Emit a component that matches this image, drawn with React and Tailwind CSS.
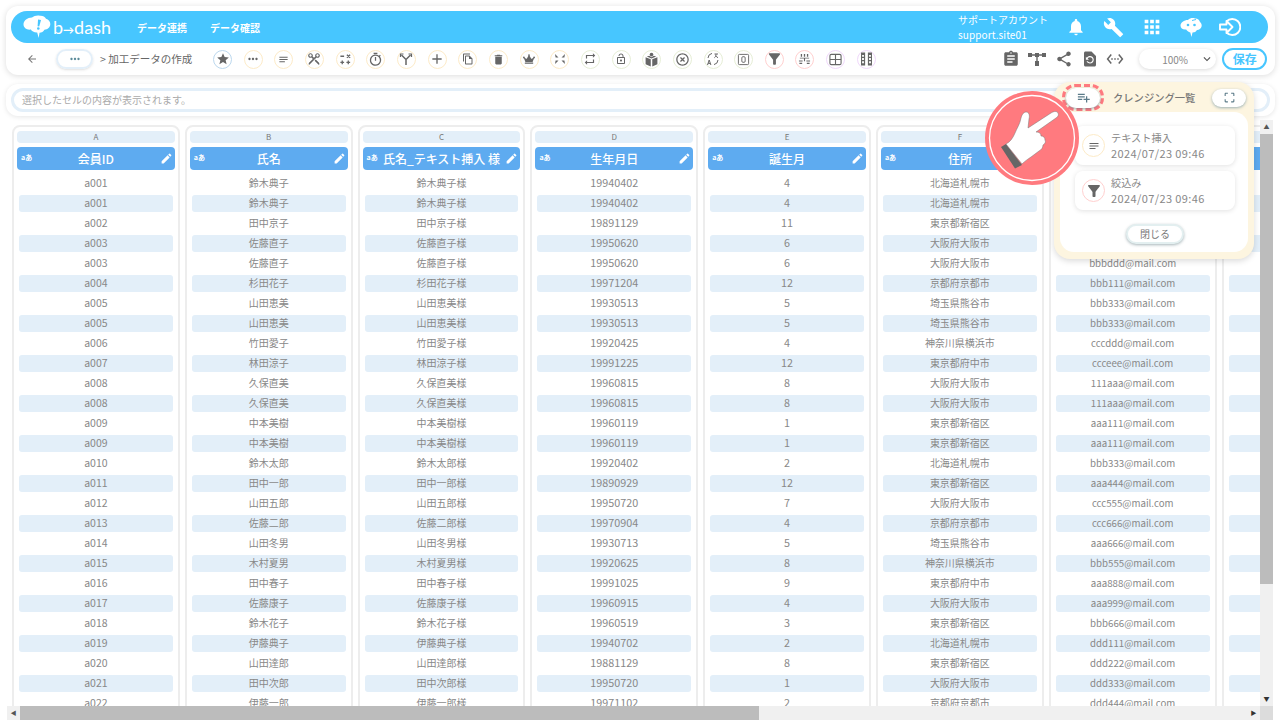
import React from 'react'
import {
  MdArrowBack, MdStar, MdMoreHoriz, MdNotes, MdContentCut, MdOutlineTimer, MdAdd, MdOutlineFileCopy, MdDelete,
  MdRepeat, MdLockOpen, MdHighlightOff, MdFilterAlt, MdNotifications, MdBuild, MdApps, MdAssignment,
  MdShare, MdRestorePage, MdSettingsEthernet, MdExpandMore, MdEdit, MdPlaylistAdd, MdCropFree,
} from 'react-icons/md'
import { FaCrown } from 'react-icons/fa'

const font = { fontFamily: '"Noto Sans CJK JP", "Noto Sans", sans-serif' }

const rows = [
  ['a001', '鈴木典子', '19940402', '4', '北海道札幌市', ''],
  ['a001', '鈴木典子', '19940402', '4', '北海道札幌市', ''],
  ['a002', '田中京子', '19891129', '11', '東京都新宿区', ''],
  ['a003', '佐藤直子', '19950620', '6', '大阪府大阪市', ''],
  ['a003', '佐藤直子', '19950620', '6', '大阪府大阪市', 'bbbddd@mail.com'],
  ['a004', '杉田花子', '19971204', '12', '京都府京都市', 'bbb111@mail.com'],
  ['a005', '山田恵美', '19930513', '5', '埼玉県熊谷市', 'bbb333@mail.com'],
  ['a005', '山田恵美', '19930513', '5', '埼玉県熊谷市', 'bbb333@mail.com'],
  ['a006', '竹田愛子', '19920425', '4', '神奈川県横浜市', 'cccddd@mail.com'],
  ['a007', '林田涼子', '19991225', '12', '東京都府中市', 'ccceee@mail.com'],
  ['a008', '久保直美', '19960815', '8', '大阪府大阪市', '111aaa@mail.com'],
  ['a008', '久保直美', '19960815', '8', '大阪府大阪市', '111aaa@mail.com'],
  ['a009', '中本美樹', '19960119', '1', '東京都新宿区', 'aaa111@mail.com'],
  ['a009', '中本美樹', '19960119', '1', '東京都新宿区', 'aaa111@mail.com'],
  ['a010', '鈴木太郎', '19920402', '2', '北海道札幌市', 'bbb333@mail.com'],
  ['a011', '田中一郎', '19890929', '12', '東京都新宿区', 'aaa444@mail.com'],
  ['a012', '山田五郎', '19950720', '7', '大阪府大阪市', 'ccc555@mail.com'],
  ['a013', '佐藤二郎', '19970904', '4', '京都府京都市', 'ccc666@mail.com'],
  ['a014', '山田冬男', '19930713', '5', '埼玉県熊谷市', 'aaa666@mail.com'],
  ['a015', '木村夏男', '19920625', '8', '神奈川県横浜市', 'bbb555@mail.com'],
  ['a016', '田中春子', '19991025', '9', '東京都府中市', 'aaa888@mail.com'],
  ['a017', '佐藤康子', '19960915', '4', '大阪府大阪市', 'aaa999@mail.com'],
  ['a018', '鈴木花子', '19960519', '3', '東京都新宿区', 'bbb666@mail.com'],
  ['a019', '伊藤典子', '19940702', '2', '北海道札幌市', 'ddd111@mail.com'],
  ['a020', '山田達郎', '19881129', '8', '東京都新宿区', 'ddd222@mail.com'],
  ['a021', '田中次郎', '19950720', '1', '大阪府大阪市', 'ddd333@mail.com'],
  ['a022', '伊藤一郎', '19971102', '2', '京都府京都市', 'ddd444@mail.com'],
]

const columns = [
  { letter: 'A', title: '会員ID', size: 'text-[10.500px] leading-[15px]', cell: (r) => r[0] },
  { letter: 'B', title: '氏名', size: 'text-[10px] leading-[15px]', cell: (r) => r[1] },
  { letter: 'C', title: '氏名_テキスト挿入 様', size: 'text-[10px] leading-[15px]', cell: (r) => r[1] + '様' },
  { letter: 'D', title: '生年月日', size: 'text-[10.800px] leading-[15px]', cell: (r) => r[2] },
  { letter: 'E', title: '誕生月', size: 'text-[10.800px] leading-[15px]', cell: (r) => r[3] },
  { letter: 'F', title: '住所', size: 'text-[10px] leading-[15px]', cell: (r) => r[4] },
  { letter: '', title: '', size: 'text-[9.700px] leading-[17px]', cell: (r) => r[5] },
  { letter: 'H', title: '', size: 'text-[10px] leading-[15px]', cell: () => '' },
]

const CalcIcon = () => (
  <svg width="13" height="13" viewBox="0 0 14 14" stroke="currentColor" strokeWidth="1.4" fill="none">
    <path d="M1.5 3.500h4M8.500 2l3.500 3M12 2L8.500 5M3.500 8v4M1.500 10h4M10 8v4M8 10h4" />
  </svg>
)

const ForkIcon = () => (
  <svg width="14" height="14" viewBox="0 0 14 14" stroke="currentColor" strokeWidth="1.500" fill="none">
    <path d="M7 13V7.500L2.500 3M7 7.500L11.500 3" />
    <path d="M1.500 5V2h3M12.500 5V2h-3" strokeWidth="1.200" />
  </svg>
)

const ShrinkIcon = () => (
  <svg width="12" height="12" viewBox="0 0 12 12" fill="currentColor">
    <path d="M1 1l3.500 3.500H1.600zM11 1L7.500 4.500h2.900zM1 11l3.500-3.500H1.600zM11 11L7.500 7.500h2.900z" />
  </svg>
)

const BoxIcon = () => (
  <svg width="15" height="15" viewBox="0 0 14 14" fill="currentColor">
    <circle cx="7" cy="2.400" r="1.700" />
    <path d="M1.500 5L6.300 6.800V13.500L1.500 11.500zM12.500 5L7.700 6.800v6.700l4.800-2zM2.600 4.200L5 3.400 7 5l2-1.600 2.400.8L7 6z" />
  </svg>
)

const TranslateIcon = () => (
  <svg width="14" height="14" viewBox="0 0 14 14" fill="none" stroke="currentColor" strokeWidth="1">
    <path d="M2 6a5 5 0 0 1 4-4.600M12 8a5 5 0 0 1-4 4.600" />
    <path d="M1.500 13l1.700-5 1.700 5M2.200 11.400h2M8.500 2h3.500M10 2.200c0 1.700-.6 2.900-1.600 3.500M9.800 3.700c.4.8 1.200 1.600 2.200 2" />
  </svg>
)

const ZeroBoxIcon = () => (
  <svg width="13" height="13" viewBox="0 0 14 14" fill="none" stroke="currentColor" strokeWidth="1">
    <rect x="1.500" y="1.500" width="11" height="11" rx="1" />
    <rect x="5.200" y="4" width="3.600" height="6" rx="1.200" />
  </svg>
)

const DotTreeIcon = () => (
  <svg width="13" height="13" viewBox="0 0 14 14" fill="currentColor">
    <path d="M3 1h1.400v3H3zM6.300 1h1.400v3H6.300zM9.600 1H11v3H9.600zM2 5h10v1H2zM1 8h4v1.200H1zM9 8h4v1.200H9zM1.500 10.600h3v1.200h-3zM9.500 10.600h3v1.200h-3zM6.400 6h1.200v3H6.400z" />
  </svg>
)

const WindowIcon = () => (
  <svg width="13" height="13" viewBox="0 0 14 14" fill="none" stroke="currentColor" strokeWidth="1.200">
    <rect x="1" y="1.500" width="12" height="11" rx="1.500" />
    <path d="M7 1.500v11M1 7h12" />
  </svg>
)

const ColumnsIcon = () => (
  <svg width="11" height="14" viewBox="0 0 12 14" fill="currentColor">
    <path d="M0 0h4.500v14H0zM7.500 0H12v14H7.500z" />
    <path d="M1.200 2.500h2v2h-2zM1.200 6h2v2h-2zM1.200 9.500h2v2h-2zM8.800 2.500h2v2h-2zM8.800 6h2v2h-2zM8.800 9.500h2v2h-2z" fill="#fff" />
  </svg>
)

const FlowIcon = () => (
  <svg width="20" height="18" viewBox="0 0 20 18" fill="currentColor">
    <path d="M1 3h4v4H1zM8 3h4v4H8zM15 3h4v4h-4zM5 4.300h3v1.400H5zM12 4.300h3v1.400h-3zM9.300 7h1.400v4H9.300zM8 11h4v5H8z" />
  </svg>
)

const BrandLogo = () => (
  <svg width="28" height="24" viewBox="0 0 28 24">
    <path d="M9 2.500C11 .8 14.500 0 17 .8c2.500-.3 5 1 6 3 2.500.6 4.300 2.800 4.300 5.300 0 3.200-2.700 5.700-5.900 5.700-.9 2-2.800 3-4.900 3l-.8 5.200-1.500-5.600C11 17.500 8.800 16.300 7.900 14.500 4 15.200.5 13 .5 9.300.5 5.500 4.500 2.500 9 2.500z" fill="#fff" />
    <path d="M15 4.500l3 .4-1.800 6.600-1.600-.2z" fill="#47c6ff" />
    <circle cx="15.300" cy="13.500" r="1.300" fill="#47c6ff" />
  </svg>
)

const MascotIcon = () => (
  <svg width="22" height="21" viewBox="0 0 22 21" fill="#fff">
    <path d="M8 3C10 1 13 .5 15 1.500c2.500-.2 4.500 1.500 5 3.500 1.500 1.200 2 3 1.500 4.800-.6 2-2.400 3.300-4.500 3.200-1 1.800-2.700 2.600-4.500 2.500L11.500 20l-1.200-4.600C8.500 15 7 14 6.200 12.500 3 13 .5 11.200.5 8.500.5 5.500 4 3 8 3z" />
    <circle cx="8" cy="8" r="1.300" fill="#47c6ff" />
    <circle cx="14.500" cy="8" r="1.300" fill="#47c6ff" />
    <path d="M12 3.500l4-1" stroke="#47c6ff" strokeWidth="1" />
  </svg>
)

const SignInIcon = () => (
  <svg width="22" height="20" viewBox="0 0 22 20" fill="none" stroke="#fff" strokeWidth="1.900" strokeLinejoin="round">
    <path d="M7.500 4.500A8 8 0 1 1 7.500 15.500" />
    <path d="M1 7.500h6.500V4l6 6-6 6v-3.500H1z" />
  </svg>
)

const HandIcon = () => (
  <svg width="94" height="94" viewBox="0 0 94 94">
    <circle cx="47" cy="47" r="47" fill="#ff7a7f" />
    <circle cx="47" cy="47" r="42.500" fill="none" stroke="#fff" strokeWidth="1.300" />
    <path d="M16 56l5-3 16 21-7 3.500z" fill="#666" />
    <path d="M21 53c4-2 7-6 9-11c2-5 5-9 6-15c1-4 3-6 5-6c3 0 4 3 3 7l-1 9l23-15c3-2 6-2 7 0c1 2 0 4-2 5L51 41c3 0 5 1 5 4c2 0 4 1 4 4c1 2 0 4-2 5c0 3-2 5-4 6l-8 6c-3 2-6 4-9 7z" fill="#fff" stroke="#777" strokeWidth="0.500" />
  </svg>
)

const Tool = ({ ring, children }) => (
  <div className={'w-[19px] h-[19px] rounded-full border bg-white flex items-center justify-center shrink-0 text-[#666] ' + ring}>
    {children}
  </div>
)

const Toolbar = () => (
  <div className="flex items-center gap-[11.670px] ml-[19px]">
    <Tool ring="border-[#bcd8ee]"><MdStar size={14} /></Tool>
    <Tool ring="border-[#fdebc8]"><MdMoreHoriz size={14} /></Tool>
    <Tool ring="border-[#fdebc8]"><MdNotes size={11} /></Tool>
    <Tool ring="border-[#fdebc8]"><MdContentCut size={14} className="rotate-90" /></Tool>
    <Tool ring="border-[#fdebc8]"><CalcIcon /></Tool>
    <Tool ring="border-[#fdebc8]"><MdOutlineTimer size={15} /></Tool>
    <Tool ring="border-[#fdebc8]"><ForkIcon /></Tool>
    <Tool ring="border-[#fdebc8]"><MdAdd size={16} /></Tool>
    <Tool ring="border-[#fdebc8]"><MdOutlineFileCopy size={12} /></Tool>
    <Tool ring="border-[#fdebc8]"><MdDelete size={13} /></Tool>
    <Tool ring="border-[#fdebc8]"><FaCrown size={12} /></Tool>
    <Tool ring="border-[#fdebc8]"><ShrinkIcon /></Tool>
    <Tool ring="border-[#e6eed6]"><MdRepeat size={14} /></Tool>
    <Tool ring="border-[#e6eed6]"><MdLockOpen size={12} /></Tool>
    <Tool ring="border-[#e6eed6]"><BoxIcon /></Tool>
    <Tool ring="border-[#e6eed6]"><MdHighlightOff size={15} /></Tool>
    <Tool ring="border-[#e6eed6]"><TranslateIcon /></Tool>
    <Tool ring="border-[#e6eed6]"><ZeroBoxIcon /></Tool>
    <Tool ring="border-[#ffd0cf]"><MdFilterAlt size={18} /></Tool>
    <Tool ring="border-[#ffd0cf]"><DotTreeIcon /></Tool>
    <Tool ring="border-[#f0d8fb]"><WindowIcon /></Tool>
    <Tool ring="border-[#f0d8fb]"><ColumnsIcon /></Tool>
  </div>
)

const Column = ({ col }) => (
  <div className="w-[167.800px] shrink-0 border-2 border-[#ededed] rounded-lg px-[3px] pt-1 h-[640px]">
    <div className="h-3 bg-[#e3eff9] rounded-sm text-[8px] leading-3 text-center text-[#777]">{col.letter}</div>
    <div className="relative h-[23px] mt-1 bg-[#5eabf0] rounded-sm text-white text-[12px] font-medium leading-[23px] text-center">
      <span className="absolute left-1 top-0 text-[7px] leading-5 font-bold">aあ</span>
      {col.title}
      <MdEdit size={13} className="absolute right-[2px] top-[5px]" />
    </div>
    <div className="mt-[3px]">
      {rows.map((r, i) => (
        <div key={i} className="h-5 mx-[2px] pt-[2px]">
          <div className={'h-[17px] rounded-[3px] text-center text-[#888] ' + col.size + ' ' + (i % 2 === 1 ? 'bg-[#e3eff9]' : '')}>
            {col.cell(r)}
          </div>
        </div>
      ))}
    </div>
  </div>
)

const PopupItem = ({ ring, icon, name }) => (
  <div className="h-[39px] bg-white rounded-lg shadow-[0_1px_5px_rgba(0,0,0,0.12)] flex items-center pl-[7px] gap-[6px]">
    <div className={'w-[23px] h-[23px] rounded-full border bg-white flex items-center justify-center text-[#666] ' + ring}>{icon}</div>
    <div className="text-[10.200px] leading-[16px] text-[#888]">
      <div>{name}</div>
      <div className="text-[11px] leading-[15px] tracking-[0.4px]">2024/07/23 09:46</div>
    </div>
  </div>
)

export default function App() {
  return (
    <div style={font} className="relative w-[1280px] h-[720px] overflow-hidden bg-white flex flex-col">
      <div className="ml-[6px] mt-[6px] w-[1269px] h-[69px] rounded-xl bg-white shadow-[0_1px_6px_rgba(0,0,0,0.14)] px-[5px] pt-[5px] shrink-0">
        <div className="h-8 w-[1257px] rounded-full bg-[#47c6ff] flex items-center text-white pl-[12px]">
          <BrandLogo />
          <span style={{ fontFamily: 'Lato, sans-serif' }} className="ml-[2px] w-[84px] text-[18px] font-normal leading-none whitespace-nowrap">
            b<span className="text-[11px] font-bold">→</span>dash
          </span>
          <span className="text-[10px] font-bold w-[73px]">データ連携</span>
          <span className="text-[10px] font-bold">データ確認</span>
          <div className="ml-auto mr-[221px] w-[89px] text-[10px] leading-[15px] whitespace-nowrap">
            <div>サポートアカウント</div>
            <div className="tracking-[0.1px]">support.site01</div>
          </div>
        </div>
        <div className="h-8 flex items-center text-[#666] pl-[15px]">
          <MdArrowBack size={12} className="text-[#777]" />
          <div className="ml-[18px] w-[37px] h-5 rounded-full border-2 border-[#e3eff9] shadow-sm flex items-center justify-center">
            <MdMoreHoriz size={14} className="text-[#5a8a99]" />
          </div>
          <span className="ml-[7px] w-[94px] shrink-0 whitespace-nowrap text-[10.500px]">&gt; 加工データの作成</span>
          <Toolbar />
          <div className="ml-[126px] flex items-center gap-[7.600px]">
            <MdAssignment size={18} />
            <FlowIcon />
            <MdShare size={18} />
            <MdRestorePage size={18} />
            <MdSettingsEthernet size={18} />
          </div>
          <div className="ml-[15px] w-[77px] h-5 shrink-0 rounded-full bg-white shadow-[0_1px_4px_rgba(0,0,0,0.15)] flex items-center text-[10px] text-[#888] pl-[23px]">
            100%
            <MdExpandMore size={14} className="ml-auto mr-[2px] text-[#555]" />
          </div>
          <button className="ml-[6px] w-[45px] h-[22px] shrink-0 rounded-full border-2 border-[#47c6ff] bg-white text-[#47c6ff] text-[12px] font-bold leading-none">保存</button>
        </div>
      </div>

      <div className="ml-[6px] mt-[9px] w-[1269px] h-[32px] rounded-xl bg-white shadow-[0_1px_5px_rgba(0,0,0,0.1)] px-[5px] pt-1 shrink-0">
        <div className="h-6 rounded-full border-[3px] border-[#e3eff9] pl-[8px] text-[10px] leading-[18px] text-[#aaa]">
          選択したセルの内容が表示されます。
        </div>
      </div>

      <div className="flex-1 min-h-0 flex mt-1 pr-[7px]">
        <div className="flex-1 min-w-0 overflow-hidden flex gap-[5px] pl-3 pt-[5px]">
          {columns.map((c, i) => <Column key={i} col={c} />)}
        </div>
        <div className="w-[13px] bg-[#f0f0f0] flex flex-col items-center shrink-0">
          <div className="h-[14px] text-[6px] leading-[14px] text-[#555]">▲</div>
          <div className="w-full h-[450px] bg-[#bcbcbc]" />
          <div className="mt-auto h-[14px] text-[6px] leading-[14px] text-[#333]">▼</div>
        </div>
      </div>

      <div className="h-[14px] shrink-0 flex ml-[7px] mr-[7px] bg-[#f0f0f0]">
        <div className="w-[13px] text-[6px] leading-[14px] text-center text-[#555]">◀</div>
        <div className="w-[739px] bg-[#bcbcbc]" />
        <div className="ml-auto w-[13px] text-[6px] leading-[14px] text-center text-[#333]">▶</div>
        <div className="w-[13px] bg-[#dcdcdc]" />
      </div>

      {/* クレンジング一覧 popup */}
      <div className="absolute left-[1054px] top-[82px] w-[200px] h-[177px] rounded-2xl bg-[#fdf5e0] shadow-[0_2px_6px_rgba(0,0,0,0.15)] px-[6px] pt-[1px] flex flex-col">
        <div className="h-[29px] flex items-center shrink-0">
          <div className="w-[42px] h-[27px] ml-[2px] rounded-[13px] border-[3px] border-dashed border-[#ff7a7f] flex items-center justify-center">
            <div className="w-[34px] h-[20px] rounded-full bg-white shadow-[0_1px_3px_rgba(60,110,140,0.5)] flex items-center justify-center text-[#5a7a88]">
              <MdPlaylistAdd size={15} />
            </div>
          </div>
          <span className="ml-[9px] text-[10.300px] text-[#777] font-medium whitespace-nowrap">クレンジング一覧</span>
          <div className="ml-auto mr-[2px] w-[34px] h-[18px] rounded-full bg-white shadow-[0_1px_3px_rgba(60,110,140,0.5)] flex items-center justify-center text-[#5a7a88]">
            <MdCropFree size={13} />
          </div>
        </div>
        <div className="h-[140px] bg-white rounded-[14px] pl-[15px] pr-[13px] pt-[14px] flex flex-col gap-[6px]">
          <PopupItem ring="border-[#fdebc8]" icon={<MdNotes size={12} />} name="テキスト挿入" />
          <PopupItem ring="border-[#ffd0cf]" icon={<MdFilterAlt size={18} />} name="絞込み" />
          <button className="self-center mt-[8px] w-[58px] h-5 rounded-full border-2 border-[#e3eff0] bg-white shadow-[0_1px_3px_rgba(60,90,100,0.45)] text-[10px] leading-none text-[#777]">閉じる</button>
        </div>
      </div>

      {/* header icons + hand sit over the cards */}
      <div className="absolute left-[1066px] top-[16px] flex items-center gap-[17px]">
        <MdNotifications size={20} className="text-white" />
        <MdBuild size={21} className="text-white" />
        <MdApps size={22} className="text-white" />
        <MascotIcon />
        <SignInIcon />
      </div>
      <div className="absolute left-[985px] top-[91px]"><HandIcon /></div>
    </div>
  )
}
